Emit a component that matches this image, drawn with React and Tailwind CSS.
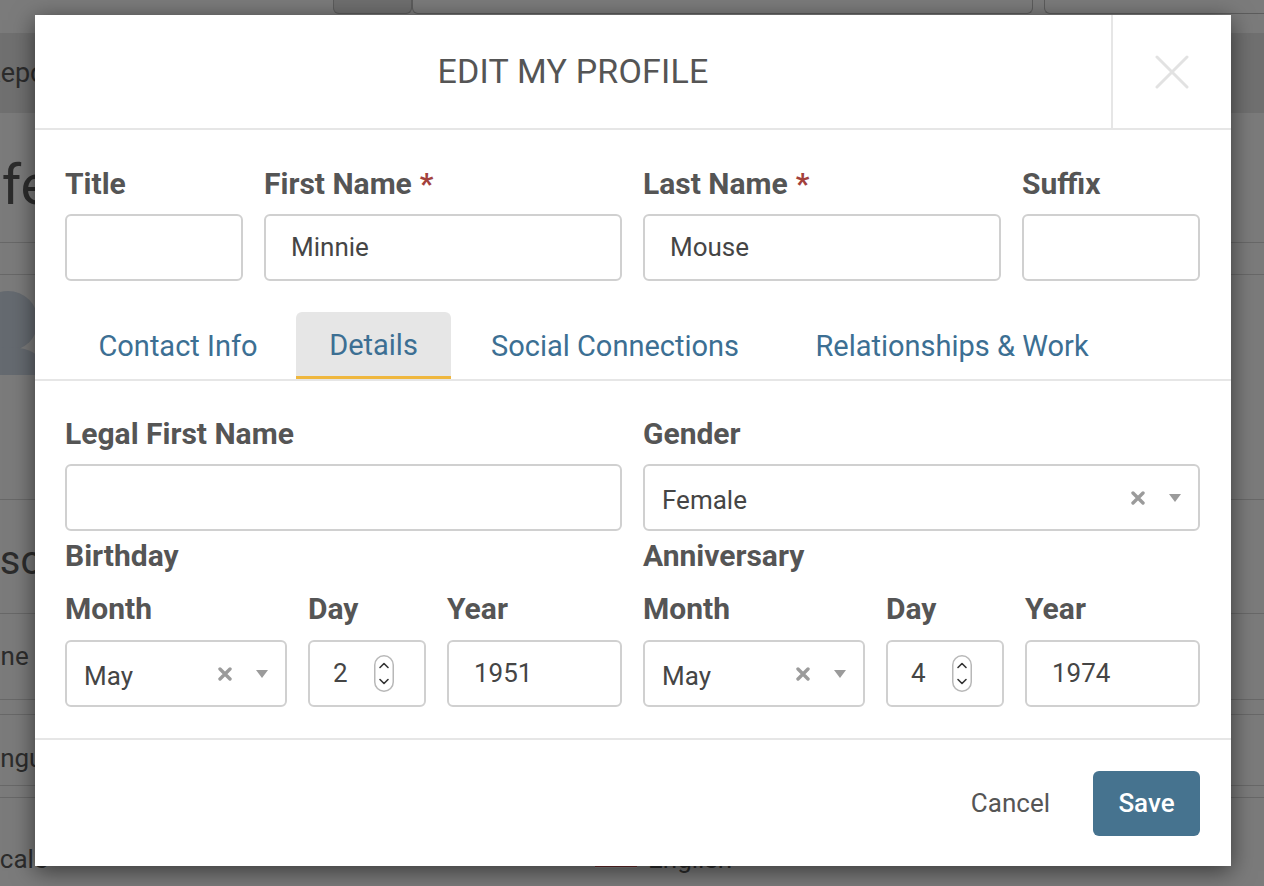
import React from "react";

const labelCls =
  "h-[34px] leading-[34px] text-[30px] font-bold text-[#555555] whitespace-nowrap";
const boxCls =
  "h-[67px] border-2 border-[#d0d0d0] rounded-[6px] bg-white flex items-center text-[26px] text-[#454545]";

function Label({ children, req }) {
  return (
    <div className={labelCls}>
      {children}
      {req && <span className="text-[#a3413c] ml-[8px]">*</span>}
    </div>
  );
}

function ClearIcon() {
  return (
    <svg width="14" height="14" viewBox="0 0 14 14" className="shrink-0">
      <path d="M2 2L12 12M12 2L2 12" stroke="#9b9b9b" strokeWidth="3.4" strokeLinecap="round" />
    </svg>
  );
}

function Caret() {
  return (
    <svg width="12" height="8" viewBox="0 0 12 8" className="shrink-0 ml-[24px]">
      <path d="M0 0H12L6 8Z" fill="#9b9b9b" />
    </svg>
  );
}

function Select({ value }) {
  return (
    <div className={boxCls + " pl-[17px] pr-[17px]"}>
      <span className="flex-1 pt-[5px]">{value}</span>
      <ClearIcon />
      <Caret />
    </div>
  );
}

function Spinner() {
  return (
    <svg width="20" height="37" viewBox="0 0 20 37" className="shrink-0">
      <rect x="0.75" y="0.75" width="18.5" height="35.5" rx="9.25" fill="white" stroke="#b8b8b8" strokeWidth="1.5" />
      <path d="M6 12.5L10 8.5L14 12.5" fill="none" stroke="#333" strokeWidth="1.6" strokeLinecap="round" strokeLinejoin="round" />
      <path d="M6 24.5L10 28.5L14 24.5" fill="none" stroke="#333" strokeWidth="1.6" strokeLinecap="round" strokeLinejoin="round" />
    </svg>
  );
}

function DayInput({ value }) {
  return (
    <div className={boxCls + " pl-[23px] pr-[30px] justify-between"}>
      <span>{value}</span>
      <Spinner />
    </div>
  );
}

function TextInput({ value }) {
  return <div className={boxCls + " pl-[25px]"}>{value}</div>;
}

function DateGroup({ title, day, year }) {
  return (
    <div className="flex flex-col">
      <div className="mt-[8px]">
        <Label>{title}</Label>
      </div>
      <div className="grid grid-cols-[222px_118px_175px] gap-x-[21px] mt-[19px]">
        <Label>Month</Label>
        <Label>Day</Label>
        <Label>Year</Label>
        <div className="mt-[14px]">
          <Select value="May" />
        </div>
        <div className="mt-[14px]">
          <DayInput value={day} />
        </div>
        <div className="mt-[14px]">
          <TextInput value={year} />
        </div>
      </div>
    </div>
  );
}

function Tab({ children, active, w }) {
  return (
    <div
      className={
        "h-[67px] flex items-center justify-center pt-[3px] text-[29px] text-[#3c6f93] rounded-t-[6px] " +
        w +
        (active ? " bg-[#e6e6e6] border-b-[3px] border-[#efb73e]" : "")
      }
    >
      {children}
    </div>
  );
}

function Background() {
  return (
    <div className="flex flex-col h-full text-[#2c2c2c] overflow-hidden">
      <div className="h-[15px] flex shrink-0">
        <div className="w-[333px]" />
        <div className="w-[79px] h-[14px] bg-[#6f6f6f] border-x border-b border-[#5c5c5c] rounded-b-[6px]" />
        <div className="w-[621px] h-[14px] border-x border-b border-[#5c5c5c] rounded-b-[6px]" />
        <div className="w-[11px]" />
        <div className="flex-1 h-[14px] border-l border-b border-[#5c5c5c] rounded-bl-[6px]" />
      </div>
      <div className="h-[18px] shrink-0" />
      <div className="h-[80px] shrink-0 bg-[#707070] flex items-center text-[27px]">
        <span className="-ml-[16px]">Reports</span>
      </div>
      <div className="h-[130px] shrink-0 flex items-center text-[56px] border-b border-[#686868]">
        <span className="-ml-[42px] pt-[14px]">Life</span>
      </div>
      <div className="h-[32px] shrink-0 border-b border-[#686868]" />
      <div className="h-[225px] shrink-0 border-b border-[#686868] pt-[10px]">
        <svg width="120" height="90" viewBox="0 0 120 90" className="-ml-[82px]">
          <circle cx="90" cy="36" r="30" fill="#656a70" />
          <path d="M50 90C52 70 70 62 90 62C110 62 128 70 130 90Z" fill="#656a70" />
        </svg>
      </div>
      <div className="h-[114px] shrink-0 flex items-center text-[40px] border-b border-[#686868]">
        <span className="-ml-[60px] pt-[8px]">Personal</span>
      </div>
      <div className="h-[86px] shrink-0 flex items-center text-[26px] border-b border-[#686868]">
        <span className="-ml-[45px]">Phone .</span>
      </div>
      <div className="h-[15px] shrink-0 border-b border-[#686868]" />
      <div className="h-[71px] shrink-0 flex items-center text-[26px] border-b border-[#686868]">
        <span className="-ml-[28px] pt-[16px]">Language</span>
      </div>
      <div className="h-[12px] shrink-0 border-b border-[#686868]" />
      <div className="h-[120px] shrink-0 flex items-start pt-[42px] text-[26px]">
        <span className="-ml-[29px] w-[624px]">Locale</span>
        <svg width="42" height="22" viewBox="0 0 42 22" className="mt-[6px]">
          <rect width="42" height="22" fill="#8a8a8a" />
          <rect y="0" width="42" height="3" fill="#6a2a2a" />
          <rect y="6" width="42" height="3" fill="#6a2a2a" />
          <rect y="12" width="42" height="3" fill="#6a2a2a" />
          <rect y="18" width="42" height="3" fill="#6a2a2a" />
        </svg>
        <span className="ml-[11px]">English</span>
      </div>
    </div>
  );
}

export default function App() {
  return (
    <div className="relative w-[1264px] h-[886px] overflow-hidden bg-[#7b7b7b] font-['Roboto',sans-serif]">
      <Background />
      <div className="absolute left-[35px] top-[15px] w-[1196px] bg-white shadow-[0_5px_22px_rgba(0,0,0,0.55)] flex flex-col">
        {/* header */}
        <div className="h-[115px] flex border-b-2 border-[#e6e6e6]">
          <div className="flex-1 flex items-center justify-center text-[34px] text-[#555555] tracking-[0.2px]">
            EDIT MY PROFILE
          </div>
          <div className="w-[120px] border-l-2 border-[#e6e6e6] flex items-center justify-center">
            <svg width="34" height="34" viewBox="0 0 34 34">
              <path d="M2 2L32 32M32 2L2 32" stroke="#e2e2e2" strokeWidth="3" strokeLinecap="round" />
            </svg>
          </div>
        </div>

        {/* body */}
        <div className="pl-[30px] pr-[31px] flex flex-col">
          <div className="grid grid-cols-[178px_358px_358px_178px] gap-x-[21px] pt-[37px]">
            <Label>Title</Label>
            <Label req>First Name</Label>
            <Label req>Last Name</Label>
            <Label>Suffix</Label>
            <div className="mt-[13px]">
              <TextInput value="" />
            </div>
            <div className="mt-[13px]">
              <TextInput value="Minnie" />
            </div>
            <div className="mt-[13px]">
              <TextInput value="Mouse" />
            </div>
            <div className="mt-[13px]">
              <TextInput value="" />
            </div>
          </div>

          {/* tabs */}
          <div className="-ml-[30px] -mr-[31px] pl-[30px] mt-[31px] flex gap-x-[5px] border-b-2 border-[#e6e6e6]">
            <Tab w="w-[226px]">Contact Info</Tab>
            <Tab w="w-[155px]" active>
              Details
            </Tab>
            <Tab w="w-[318px]">Social Connections</Tab>
            <Tab w="w-[346px]">Relationships &amp; Work</Tab>
          </div>

          <div className="grid grid-cols-2 gap-x-[21px] pt-[36px]">
            <Label>Legal First Name</Label>
            <Label>Gender</Label>
            <div className="mt-[13px]">
              <TextInput value="" />
            </div>
            <div className="mt-[13px]">
              <Select value="Female" />
            </div>
            <DateGroup title="Birthday" day="2" year="1951" />
            <DateGroup title="Anniversary" day="4" year="1974" />
          </div>
        </div>

        {/* footer */}
        <div className="mt-[31px] border-t-2 border-[#e6e6e6] pt-[31px] pb-[30px] pl-[30px] pr-[31px] flex justify-end items-center">
          <div className="text-[26px] text-[#555555] mr-[43px]">Cancel</div>
          <div className="w-[107px] h-[65px] rounded-[6px] bg-[#46738f] text-white text-[26px] font-medium flex items-center justify-center">
            Save
          </div>
        </div>
      </div>
    </div>
  );
}
